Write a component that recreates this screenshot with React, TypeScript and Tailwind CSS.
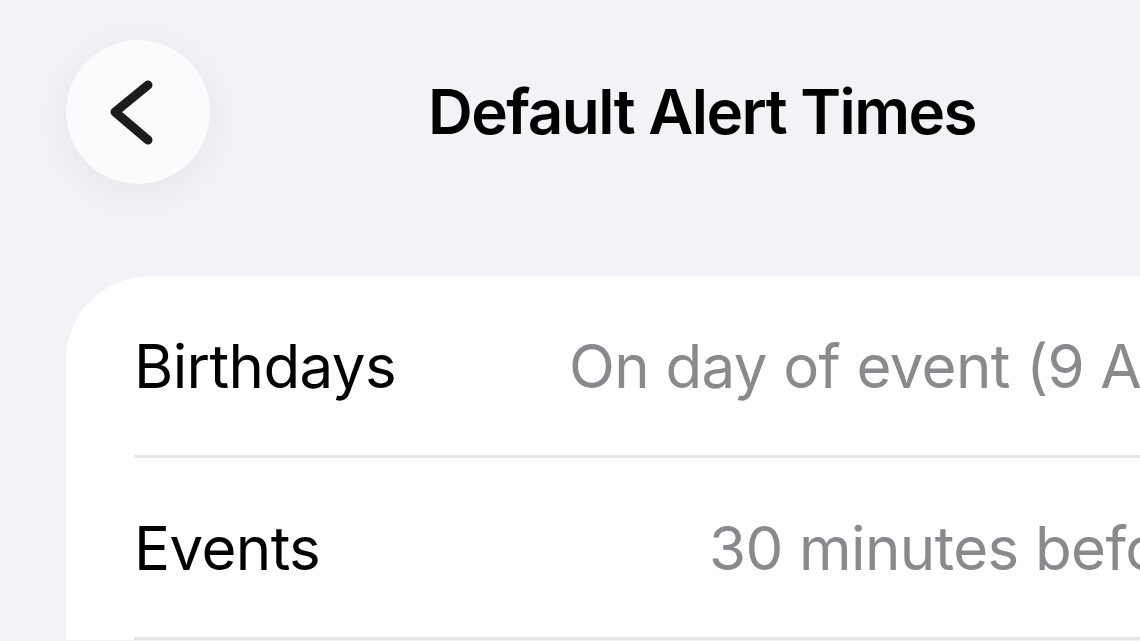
const rows = [
	{ label: 'Birthdays', value: 'On day of event (9 AM)' },
	{ label: 'Events', value: '30 minutes before' },
]

function BackButton() {
	return (
		<button
			type="button"
			className="flex size-[144px] shrink-0 items-center justify-center rounded-full bg-[#fbfbfd] shadow-[0_8px_48px_rgba(0,0,0,0.06)]"
		>
			<svg width="144" height="144" viewBox="0 0 144 144" fill="none" aria-hidden="true">
				<path
					d="M82 45 L49 72 L82 100"
					stroke="#1c1c1e"
					strokeWidth="9"
					strokeLinecap="round"
					strokeLinejoin="round"
				/>
			</svg>
		</button>
	)
}

export default function App() {
	return (
		<div
			className="h-[641px] w-[1140px] overflow-hidden bg-[#f2f2f7] text-black"
			style={{ fontFamily: 'Inter, "Noto Sans", sans-serif' }}
		>
			<header className="flex items-center pt-[40px] pl-[66px]">
				<BackButton />
				<h1 className="ml-[218px] text-[62px] leading-none font-semibold tracking-[-0.025em] whitespace-nowrap">
					Default Alert Times
				</h1>
			</header>

			<section className="mt-[92px] ml-[66px] w-[1300px] rounded-tl-[84px] bg-white">
				{rows.map(row => (
					<div key={row.label} className="pl-[68px]">
						<div className="flex h-[179px] items-center justify-between pr-[150px]">
							<span className="text-[60px] leading-none tracking-[-0.01em]">{row.label}</span>
							<span className="text-[60px] leading-none tracking-[-0.01em] whitespace-nowrap text-[#8a8a8e]">
								{row.value}
							</span>
						</div>
						<div className="h-[3px] bg-[#e5e5ea]" />
					</div>
				))}
			</section>
		</div>
	)
}
